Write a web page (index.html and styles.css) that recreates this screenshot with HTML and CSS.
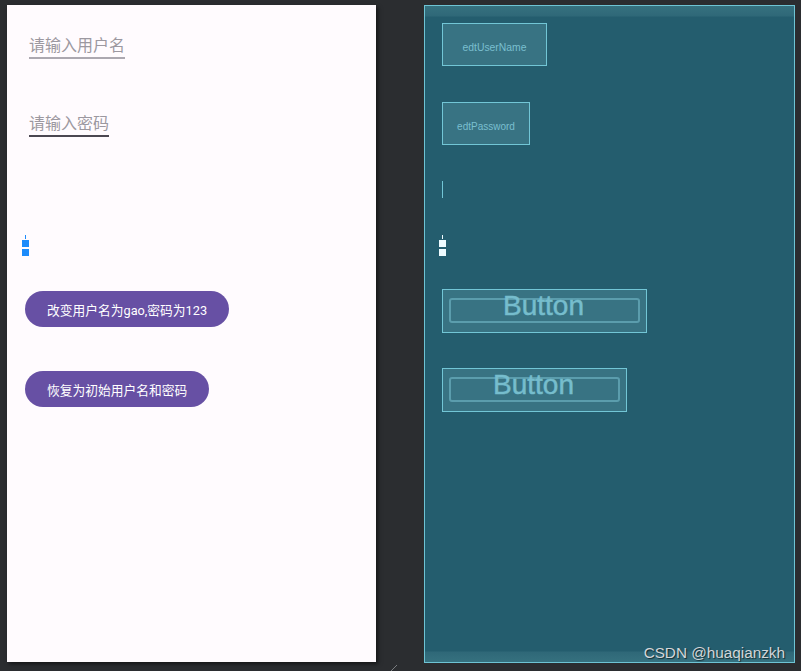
FILE: index.html
```html
<!DOCTYPE html>
<html lang="zh">
<head>
<meta charset="utf-8">
<title>Layout editor</title>
<link rel="stylesheet" href="styles.css">
</head>
<body>
<div class="workspace">
  <div class="phone">
    <div class="edit edit-user">请输入用户名</div>
    <div class="edit edit-pass">请输入密码</div>
    <svg class="marker marker-blue" width="7" height="21" viewBox="0 0 7 21">
      <rect x="3" y="0" width="1" height="4"/>
      <rect x="0" y="5" width="7" height="7"/>
      <rect x="0" y="14" width="7" height="7"/>
    </svg>
    <div class="btn btn-one">改变用户名为gao,密码为123</div>
    <div class="btn btn-two">恢复为初始用户名和密码</div>
  </div>
  <div class="blueprint">
    <div class="bp-box bp-user">edtUserName</div>
    <div class="bp-box bp-pass">edtPassword</div>
    <div class="bp-line"></div>
    <svg class="marker marker-white" width="7" height="21" viewBox="0 0 7 21">
      <rect x="3" y="0" width="1" height="4"/>
      <rect x="0" y="5" width="7" height="7"/>
      <rect x="0" y="14" width="7" height="7"/>
    </svg>
    <div class="bp-btn bp-btn-one"><div class="bp-inner"></div><div class="bp-label">Button</div></div>
    <div class="bp-btn bp-btn-two"><div class="bp-inner"></div><div class="bp-label">Button</div></div>
    <div class="watermark">CSDN @huaqianzkh</div>
  </div>
</div>
<svg class="resize" width="6" height="6" viewBox="0 0 6 6"><line x1="0" y1="6" x2="6" y2="0"/></svg>
</body>
</html>
```
FILE: styles.css
```css
html, body {
  margin: 0;
  padding: 0;
}
body {
  background: #2b2d30;
  width: 801px;
  height: 671px;
  overflow: hidden;
  position: relative;
  font-family: Roboto, "Noto Sans CJK SC", sans-serif;
}
.workspace {
  display: flex;
  align-items: flex-start;
  gap: 48px;
  padding: 5px 0 0 7px;
}
.phone {
  width: 369px;
  height: 657px;
  background: #fffbfe;
  box-shadow: 2px 2px 4px rgba(0, 0, 0, 0.55);
  display: flex;
  flex-direction: column;
  align-items: flex-start;
}
.edit {
  font-family: "Noto Sans CJK SC", sans-serif;
  font-size: 16px;
  line-height: 20px;
  color: #9c98a0;
  padding-bottom: 3px;
  margin-left: 22px;
}
.edit-user {
  margin-top: 29px;
  border-bottom: 2px solid #aca8b0;
}
.edit-pass {
  margin-top: 53px;
  border-bottom: 2px solid #4b4751;
}
.marker {
  display: block;
}
.marker-blue {
  fill: #1c8bfb;
  margin-top: 98px;
  margin-left: 15px;
}
.btn {
  height: 36px;
  border-radius: 18px;
  background: #6750a4;
  color: #ffffff;
  font-size: 12.75px;
  display: flex;
  align-items: center;
  padding: 0 22px;
  margin-left: 18px;
  white-space: nowrap;
}
.btn-one {
  margin-top: 35px;
}
.btn-two {
  margin-top: 44px;
}
.blueprint {
  position: relative;
  box-sizing: border-box;
  width: 371px;
  height: 658px;
  border: 1px solid #6ec4d4;
  background:
    linear-gradient(to bottom, #36717f 0, #2f6878 10px, #245d6e 11px, #245d6e 645px, #2f6878 646px, #36717f 656px);
  display: flex;
  flex-direction: column;
  align-items: flex-start;
}
.bp-box {
  box-sizing: border-box;
  height: 43px;
  border: 1px solid #72c6d6;
  background: #387383;
  color: #7abfcf;
  font-family: "Liberation Sans", Arial, sans-serif;
  font-size: 10px;
  display: flex;
  align-items: center;
  justify-content: center;
  padding-top: 5px;
  margin-left: 17px;
}
.bp-user {
  width: 105px;
  margin-top: 17px;
  font-size: 10.4px;
}
.bp-pass {
  width: 88px;
  margin-top: 36px;
}
.bp-line {
  width: 1px;
  height: 17px;
  background: #72c6d6;
  margin-top: 36px;
  margin-left: 17px;
}
.marker-white {
  fill: #eefbff;
  margin-top: 37px;
  margin-left: 14px;
}
.bp-btn {
  box-sizing: border-box;
  height: 44px;
  border: 1px solid #72c6d6;
  background: #387383;
  margin-left: 17px;
  display: grid;
}
.bp-btn-one {
  width: 205px;
  margin-top: 33px;
}
.bp-btn-two {
  width: 185px;
  margin-top: 35px;
}
.bp-inner {
  grid-area: 1 / 1;
  margin: 8px 6px 9px 6px;
  border: 2px solid #5b9dad;
  border-radius: 3px;
}
.bp-label {
  grid-area: 1 / 1;
  align-self: start;
  justify-self: center;
  font-family: "Liberation Sans", Arial, sans-serif;
  font-size: 28px;
  line-height: 32px;
  color: #76bdcd;
  -webkit-text-stroke: 0.5px #76bdcd;
  margin-right: 2px;
}
.watermark {
  position: absolute;
  right: 9px;
  bottom: 0;
  font-family: "Liberation Sans", Arial, sans-serif;
  font-size: 15.3px;
  line-height: 18px;
  color: #d2d6d9;
  text-shadow: 1px 1px 1px rgba(0, 0, 0, 0.6);
  white-space: nowrap;
}
.resize {
  position: absolute;
  left: 391px;
  top: 665px;
  stroke: #7a7d80;
  stroke-width: 1;
}
```
